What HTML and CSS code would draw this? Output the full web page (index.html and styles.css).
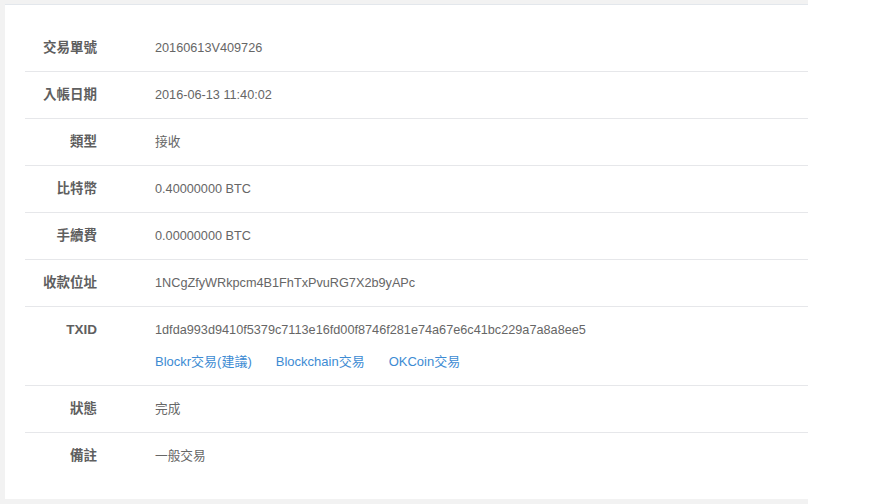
FILE: index.html
```html
<!DOCTYPE html>
<html lang="zh-Hant">
<head>
<meta charset="utf-8">
<title>交易明細</title>
<link rel="stylesheet" href="styles.css">
</head>
<body>
<div class="wrap">
  <div class="card">
    <div class="row"><div class="label">交易單號</div><div class="value">20160613V409726</div></div>
    <div class="row"><div class="label">入帳日期</div><div class="value">2016-06-13 11:40:02</div></div>
    <div class="row"><div class="label">類型</div><div class="value">接收</div></div>
    <div class="row"><div class="label">比特幣</div><div class="value">0.40000000 BTC</div></div>
    <div class="row"><div class="label">手續費</div><div class="value">0.00000000 BTC</div></div>
    <div class="row"><div class="label">收款位址</div><div class="value">1NCgZfyWRkpcm4B1FhTxPvuRG7X2b9yAPc</div></div>
    <div class="row tx">
      <div class="label">TXID</div>
      <div class="value">
        <div>1dfda993d9410f5379c7113e16fd00f8746f281e74a67e6c41bc229a7a8a8ee5</div>
        <div class="links"><a href="#">Blockr交易(建議)</a><a href="#">Blockchain交易</a><a href="#">OKCoin交易</a></div>
      </div>
    </div>
    <div class="row"><div class="label">狀態</div><div class="value">完成</div></div>
    <div class="row"><div class="label">備註</div><div class="value">一般交易</div></div>
  </div>
</div>
</body>
</html>
```
FILE: styles.css
```css
html, body {
  margin: 0;
  padding: 0;
  background: #ffffff;
}
body {
  font-family: "Liberation Sans", Arial, "Noto Sans CJK TC", sans-serif;
  font-size: 12.7px;
  color: #666666;
}
.wrap {
  width: 808px;
  height: 504px;
  box-sizing: border-box;
  background: #f2f2f2;
  padding: 4px 0 5px 5px;
}
.card {
  height: 100%;
  box-sizing: border-box;
  background: #ffffff;
  border-top: 1px solid #e3e7ec;
  padding: 20px 0 0 20px;
}
.row {
  display: grid;
  grid-template-columns: 72px 1fr;
  column-gap: 58px;
  border-bottom: 1px solid #e6e7ea;
  line-height: 46px;
}
.row:last-child {
  border-bottom: none;
}
.label {
  text-align: right;
  font-weight: bold;
  color: #5f5f5f;
  font-size: 13.5px;
  white-space: nowrap;
}
.value {
  white-space: nowrap;
}
.tx .value {
  padding-bottom: 14px;
}
.links {
  display: flex;
  gap: 24px;
  line-height: 18px;
  font-size: 13px;
}
.links a {
  color: #3d8bd3;
  text-decoration: none;
}
```
